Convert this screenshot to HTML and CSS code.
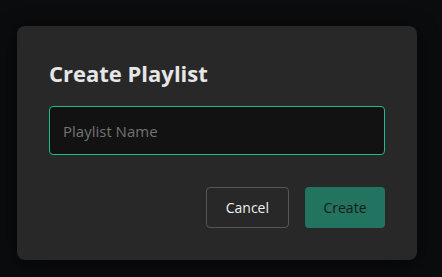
FILE: index.html
```html
<!DOCTYPE html>
<html lang="en">
<head>
    <meta charset="UTF-8">
    <meta name="viewport" content="width=device-width, initial-scale=1.0">
    <title>Create Playlist</title>
    <link rel="stylesheet" href="styles.css">
</head>
<body>
    <div class="modal">
        <h2 class="modalTitle">Create Playlist</h2>
        <input class="nameInput" type="text" placeholder="Playlist Name">
        <div class="modalActions">
            <button class="cancelButton">Cancel</button>
            <button class="createButton">Create</button>
        </div>
    </div>
</body>
</html>
```

FILE: styles.css
```css
body {
    margin: 0;
    padding: 26px 0 0 17px;
    background-color: #0b0c0e;
    font-family: "Open Sans", "Noto Sans", sans-serif;
    height: 277px;
    box-sizing: border-box;
    overflow: hidden;
}

.modal {
    width: 400px;
    height: 234px;
    box-sizing: border-box;
    padding: 32px;
    background-color: #282828;
    border-radius: 8px;
    box-shadow: 0px 4px 20px rgba(0, 0, 0, 0.6);
}

.modalTitle {
    margin: 0 0 18px 0;
    font-size: 22px;
    line-height: 30px;
    font-weight: 700;
    color: #e6e6e6;
}

.nameInput {
    display: block;
    width: 100%;
    height: 49px;
    box-sizing: border-box;
    padding: 0 13px;
    background-color: #121212;
    border: 1px solid #1db992;
    border-radius: 4px;
    outline: none;
    font-family: inherit;
    font-size: 15px;
    color: #e6e6e6;
}

.nameInput::placeholder {
    color: #737373;
}

.modalActions {
    display: flex;
    justify-content: flex-end;
    gap: 16px;
    margin-top: 32px;
}

button {
    height: 41px;
    padding: 0 19px;
    border-radius: 4px;
    font-family: inherit;
    font-size: 14px;
    cursor: pointer;
}

.cancelButton {
    background-color: transparent;
    border: 1px solid #555555;
    color: #f0f0f0;
}

.createButton {
    width: 80px;
    padding: 0;
    background-color: #22735f;
    border: none;
    color: #161a19;
}
```
